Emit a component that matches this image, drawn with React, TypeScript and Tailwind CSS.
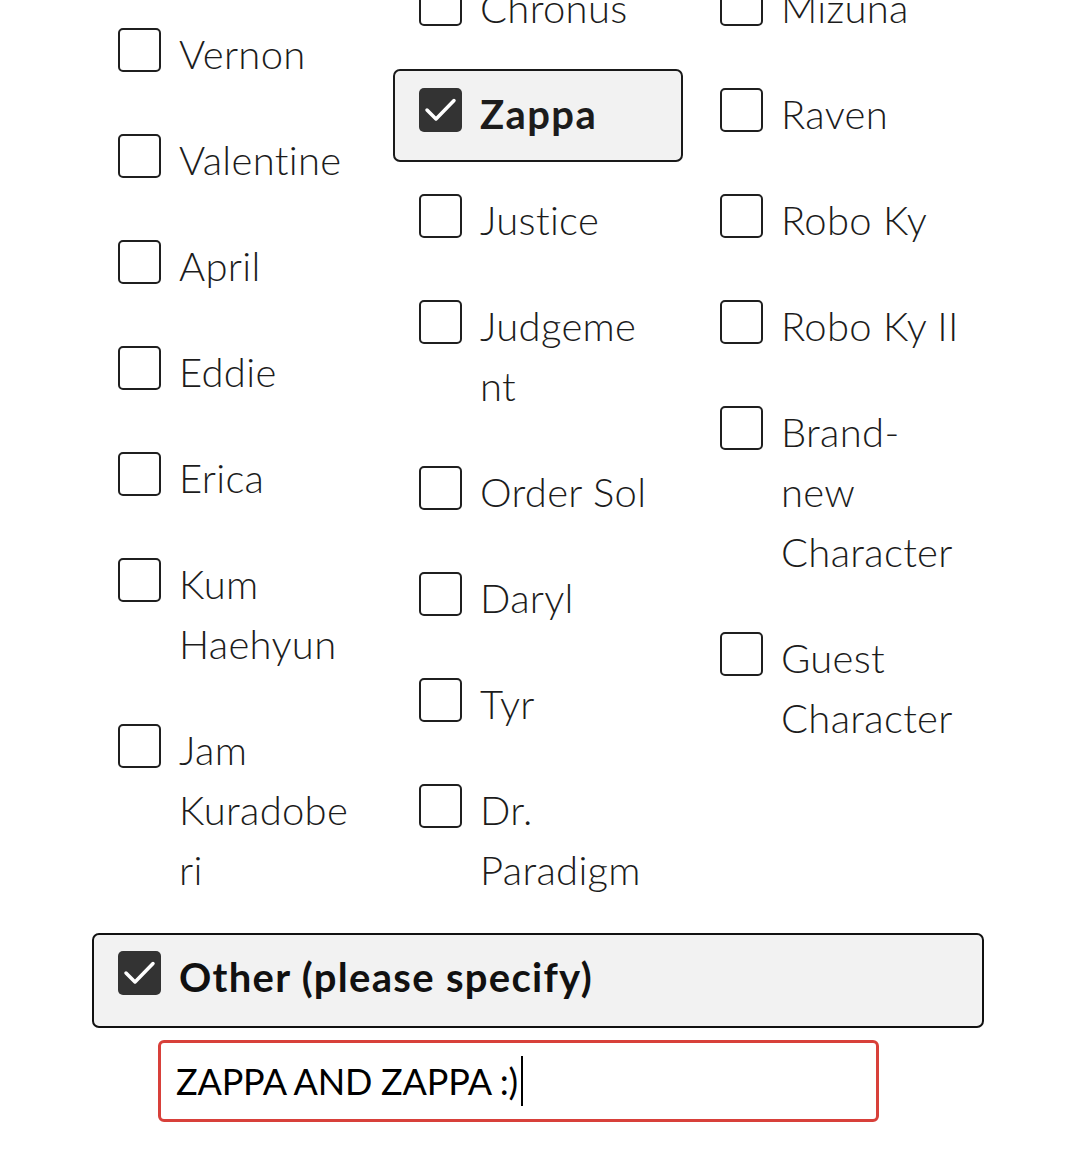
import React from "react";

type Item = { lines: string[]; checked?: boolean };

const col1: Item[] = [
  { lines: ["Sin Kiske"] },
  { lines: ["Izuna"] },
  { lines: ["Vernon"] },
  { lines: ["Valentine"] },
  { lines: ["April"] },
  { lines: ["Eddie"] },
  { lines: ["Erica"] },
  { lines: ["Kum", "Haehyun"] },
  { lines: ["Jam", "Kuradobe", "ri"] },
];
const col2: Item[] = [
  { lines: ["Happy", "Chaos"] },
  { lines: ["Chronus"] },
  { lines: ["Zappa"], checked: true },
  { lines: ["Justice"] },
  { lines: ["Judgeme", "nt"] },
  { lines: ["Order Sol"] },
  { lines: ["Daryl"] },
  { lines: ["Tyr"] },
  { lines: ["Dr.", "Paradigm"] },
];
const col3: Item[] = [
  { lines: ["Goldlewis", "Dickinson"] },
  { lines: ["Mizuna"] },
  { lines: ["Raven"] },
  { lines: ["Robo Ky"] },
  { lines: ["Robo Ky II"] },
  { lines: ["Brand-", "new", "Character"] },
  { lines: ["Guest", "Character"] },
];

function Box({ checked }: { checked?: boolean }) {
  return checked ? (
    <span className="mt-[4px] flex h-[44px] w-[43px] shrink-0 rounded-[5px] bg-[#333333]">
      <svg width="43" height="44" viewBox="0 0 43 44" fill="none">
        <path d="M8 22 L17 31 L35 12.5" stroke="#ffffff" strokeWidth="3.5" strokeLinecap="round" strokeLinejoin="round" />
      </svg>
    </span>
  ) : (
    <span className="mt-[4px] h-[44px] w-[43px] shrink-0 rounded-[5px] border-2 border-[#1f1f1f] bg-white" />
  );
}

function Option({ item }: { item: Item }) {
  return (
    <div
      className={
        "flex items-start gap-[18px] rounded-[7px] border-2 pl-[24px] pr-[20px] pt-[13px] pb-[16px] " +
        (item.checked ? "border-[#1a1a1a] bg-[#f2f2f2]" : "border-transparent")
      }
    >
      <Box checked={item.checked} />
      <span
        className={
          "block text-[40px] leading-[60px] text-[#1c1c1c] [font-variant-ligatures:none] " +
          (item.checked ? "font-bold tracking-[1.4px]" : "font-light tracking-[0.3px]")
        }
      >
        {item.lines.map((l, i) => (
          <span key={i} className="block whitespace-nowrap">
            {l}
          </span>
        ))}
      </span>
    </div>
  );
}

function Column({ items }: { items: Item[] }) {
  return (
    <div className="flex flex-col gap-[13px]">
      {items.map((it, i) => (
        <Option key={i} item={it} />
      ))}
    </div>
  );
}

export default function App() {
  return (
    <div
      className="h-[1160px] w-[1078px] overflow-hidden bg-white"
      style={{ fontFamily: "Lato, 'Liberation Sans', sans-serif" }}
    >
      <div className="ml-[92px] mt-[-203px] w-[892px]">
        <div className="grid grid-cols-[290px_290px_290px] gap-x-[11px]">
          <Column items={col1} />
          <Column items={col2} />
          <Column items={col3} />
        </div>
        <div className="mt-[15px] flex items-start gap-[18px] rounded-[7px] border-2 border-[#111111] bg-[#f2f2f2] pl-[24px] pt-[12px] pb-[19px]">
          <Box checked />
          <span className="block text-[40px] font-bold leading-[60px] tracking-[1.3px] text-[#111111] [font-variant-ligatures:none]">
            Other (please specify)
          </span>
        </div>
        <div className="ml-[66px] mt-[12px] flex h-[82px] w-[721px] items-center rounded-[6px] border-[3px] border-[#d8403a] bg-white pl-[15px]">
          <span className="text-[36px] font-normal leading-none tracking-[-0.2px] text-black">ZAPPA AND ZAPPA :)</span>
          <span className="ml-[3px] h-[50px] w-[2px] bg-black" />
        </div>
      </div>
    </div>
  );
}
